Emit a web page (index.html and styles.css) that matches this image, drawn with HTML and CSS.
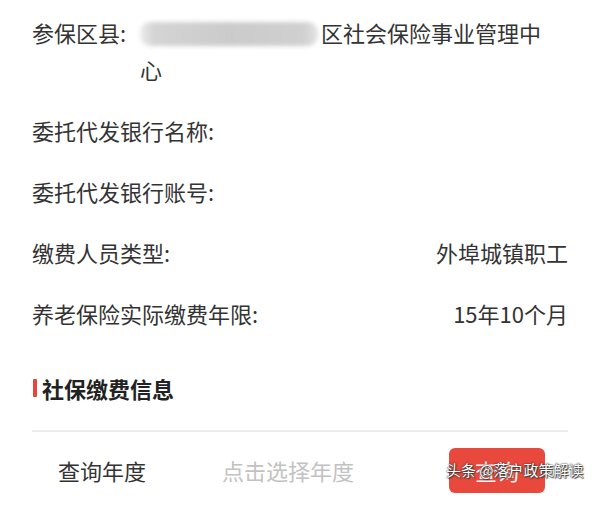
FILE: index.html
```html
<!DOCTYPE html>
<html lang="zh">
<head>
<meta charset="utf-8">
<link rel="stylesheet" href="styles.css">
</head>
<body>
<div class="page">
  <div class="info">
    <div class="row">
      <div class="label">参保区县:</div>
      <div class="value left"><span class="blur"></span>区社会保险事业管理中心</div>
    </div>
    <div class="row">
      <div class="label">委托代发银行名称:</div>
      <div class="value"></div>
    </div>
    <div class="row">
      <div class="label">委托代发银行账号:</div>
      <div class="value"></div>
    </div>
    <div class="row">
      <div class="label">缴费人员类型:</div>
      <div class="value">外埠城镇职工</div>
    </div>
    <div class="row">
      <div class="label">养老保险实际缴费年限:</div>
      <div class="value">15年10个月</div>
    </div>
  </div>
  <div class="section-title"><span class="bar"></span>社保缴费信息</div>
  <div class="divider"></div>
  <div class="query">
    <div class="q-label">查询年度</div>
    <div class="q-input">点击选择年度</div>
    <div class="q-btn">查询</div>
    <div class="watermark">头条 @落户政策解读</div>
  </div>
</div>
</body>
</html>
```
FILE: styles.css
```css
html, body {
  margin: 0;
  padding: 0;
  background: #fff;
}
body {
  font-family: "Noto Sans CJK SC", "Noto Sans", sans-serif;
  color: #333;
  width: 600px;
  height: 505px;
  overflow: hidden;
}
.page {
  padding: 2px 32px 0 32px;
  position: relative;
}
.row {
  display: flex;
  padding: 12px 0;
  font-size: 22px;
  line-height: 37px;
}
.label {
  white-space: nowrap;
  flex: 0 0 auto;
}
.row:first-child .label {
  width: 108px;
}
.value {
  flex: 1;
  text-align: right;
  white-space: nowrap;
}
.value.left {
  text-align: left;
  white-space: normal;
  max-width: 408px;
  padding-left: 0;
}
.value.left::first-line {
  letter-spacing: 0;
}
.blur {
  display: inline-block;
  vertical-align: -4px;
  width: 178px;
  height: 24px;
  margin-right: 3px;
  background: linear-gradient(90deg, #ececec 0%, #d4d4d4 8%, #cbcbcb 50%, #d0d0d0 92%, #e4e4e4 100%);
  border-radius: 10px;
  filter: blur(2px);
}
.section-title {
  display: flex;
  align-items: center;
  font-size: 22px;
  font-weight: bold;
  color: #222;
  margin-top: 28px;
  height: 32px;
  line-height: 32px;
}
.bar {
  display: inline-block;
  width: 4px;
  height: 18px;
  background: #e5473d;
  margin: 0 5px 0 1px;
  border-radius: 1px;
}
.divider {
  height: 2px;
  background: #ececec;
  margin-top: 26px;
}
.query {
  display: flex;
  align-items: center;
  height: 64px;
  margin-top: 6px;
  font-size: 22px;
  position: relative;
}
.q-label {
  margin-left: 26px;
  width: 164px;
}
.q-input {
  color: #c2c2c2;
  flex: 1;
}
.q-btn {
  width: 96px;
  height: 45px;
  line-height: 45px;
  text-align: center;
  background: #e9483c;
  color: #fff;
  border-radius: 6px;
  margin-right: 23px;
}
.watermark {
  position: absolute;
  left: 414px;
  top: 22px;
  font-size: 15px;
  line-height: 20px;
  color: #fff;
  white-space: nowrap;
  text-shadow: 0 0 2px #333, 0 0 1px #222, 1px 1px 1px #444;
}
```
